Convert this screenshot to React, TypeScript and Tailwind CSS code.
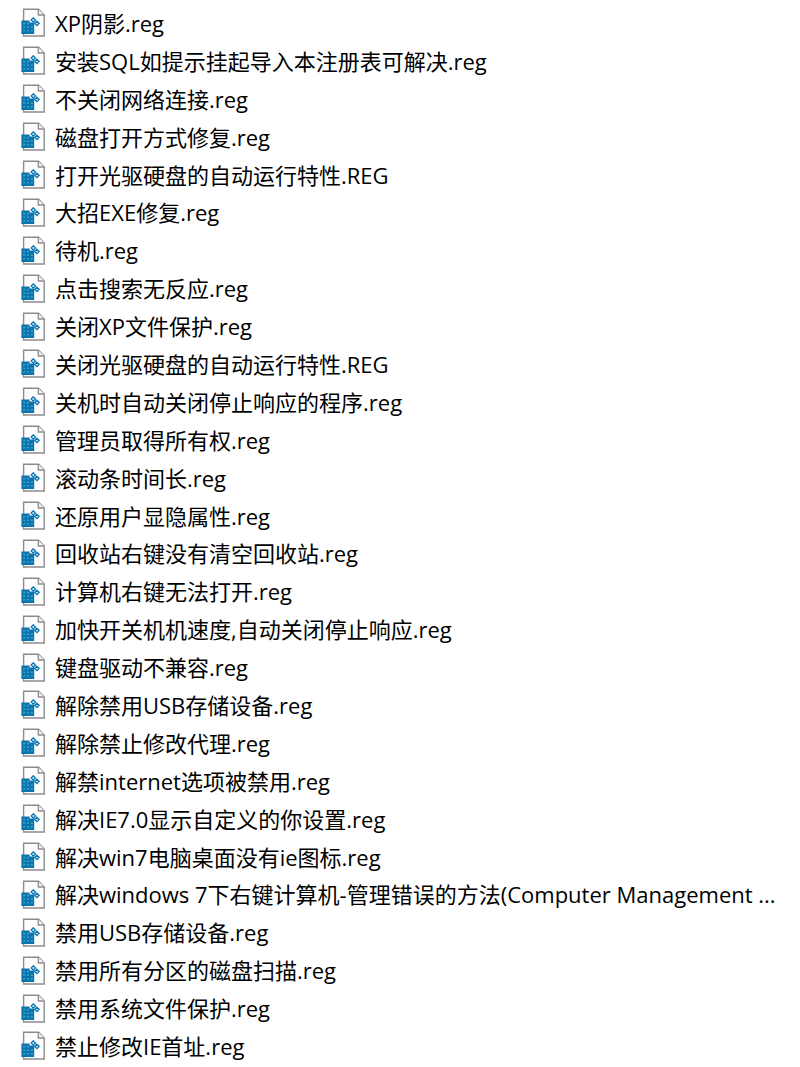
const FILES = [
  "XP阴影.reg",
  "安装SQL如提示挂起导入本注册表可解决.reg",
  "不关闭网络连接.reg",
  "磁盘打开方式修复.reg",
  "打开光驱硬盘的自动运行特性.REG",
  "大招EXE修复.reg",
  "待机.reg",
  "点击搜索无反应.reg",
  "关闭XP文件保护.reg",
  "关闭光驱硬盘的自动运行特性.REG",
  "关机时自动关闭停止响应的程序.reg",
  "管理员取得所有权.reg",
  "滚动条时间长.reg",
  "还原用户显隐属性.reg",
  "回收站右键没有清空回收站.reg",
  "计算机右键无法打开.reg",
  "加快开关机机速度,自动关闭停止响应.reg",
  "键盘驱动不兼容.reg",
  "解除禁用USB存储设备.reg",
  "解除禁止修改代理.reg",
  "解禁internet选项被禁用.reg",
  "解决IE7.0显示自定义的你设置.reg",
  "解决win7电脑桌面没有ie图标.reg",
  "解决windows 7下右键计算机-管理错误的方法(Computer Management ...",
  "禁用USB存储设备.reg",
  "禁用所有分区的磁盘扫描.reg",
  "禁用系统文件保护.reg",
  "禁止修改IE首址.reg",
]

function RegFileIcon() {
  return (
    <svg viewBox="0 0 24 29" className="h-[29px] w-6 shrink-0" aria-hidden="true">
      {/* page with folded corner */}
      <path
        d="M2.6 1.3H17.6L23.2 7V28H2.6z"
        fill="#fdfdfd"
        stroke="#8c8c8c"
        strokeWidth="1.4"
      />
      <path d="M17.3 1.3V7h5.9" fill="#f4f4f4" stroke="#8c8c8c" strokeWidth="1.3" />

      {/* registry grid */}
      <path d="M0.4 12.6H8.6V14.4H13.2V26H0.4z" fill="#0a75ad" />
      <path
        d="M2.2 15.6h2M6 15.6h2M2.2 19.2h2M6 19.2h2M9.8 19.2h2M2.2 22.8h2M6 22.8h2M9.8 22.8h2"
        stroke="#3a9fce"
        strokeWidth="1.6"
      />

      {/* loose blocks */}
      <path d="m12.2 9.8 2.3 2.2-2.1 2.2-2.3-2.2z" fill="#d3ecf7" stroke="#0a75ad" strokeWidth="1.2" />
      <path d="m15.8 13.2 2.4 2.2-2.2 2.3-2.4-2.3z" fill="#b5dff1" stroke="#0a75ad" strokeWidth="1.2" />
    </svg>
  )
}

export default function App() {
  return (
    <main className="min-h-screen overflow-hidden bg-white text-black">
      <ul className="flex min-h-screen flex-col pt-1 pb-0.5 pl-[21px] font-['Open_Sans','Noto_Sans_CJK_SC',sans-serif] text-[22px] leading-7">
        {FILES.map((name) => (
          <li key={name} className="flex flex-1 items-center gap-2.5">
            <RegFileIcon />
            <span className="whitespace-nowrap">{name}</span>
          </li>
        ))}
      </ul>
    </main>
  )
}
